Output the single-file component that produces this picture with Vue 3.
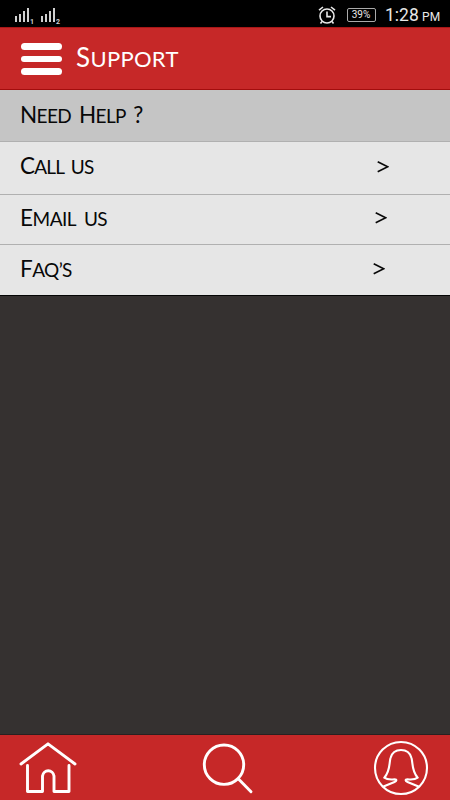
<script setup>
// Splits a label into capital and lowercase runs, lowercase ones are drawn as small caps
const runs = (label) => label.match(/[A-Z?]+|[^A-Z?]+/g).map((text) => ({
  text,
  cap: /[A-Z?]/.test(text)
}))

const title = runs('Support')

const rows = [
  { id: 'heading', label: runs('Need Help ?'), arrow: false },
  { id: 'call', label: runs('Call us'), arrow: true },
  { id: 'email', label: runs('Email us'), arrow: true },
  { id: 'faq', label: runs('Faq’s'), arrow: true }
]
</script>

<template>
  <div class="screen">
    <div class="status-bar">
      <div class="signals">
        <svg v-for="n in 2" :key="n" class="signal" width="20" height="18" viewBox="0 0 20 18">
          <path d="M1 10h2v6H1zM5 8h2v8H5zM9 5h2v11H9zM13 2h2v14h-2z" fill="#d0d0d0" />
          <text x="16" y="17.5">{{ n }}</text>
        </svg>
      </div>
      <svg class="alarm" width="18" height="20" viewBox="0 0 18 20">
        <g fill="none" stroke="#e8e8e8" stroke-width="1.6">
          <circle cx="9" cy="11" r="7" />
          <path d="M9 6.5V11.6h4M1 5.2L5 2M17 5.2L13 2M4 16.5L2.5 18.5M14 16.5L15.5 18.5" />
        </g>
      </svg>
      <div class="battery">39%</div>
      <div class="clock">1:28 <small>PM</small></div>
    </div>

    <header class="header">
      <div class="menu">
        <i></i>
        <i></i>
        <i></i>
      </div>
      <h1 class="caps title">
        <span v-for="(run, i) in title" :key="i" :class="{ cap: run.cap }">{{ run.text }}</span>
      </h1>
    </header>

    <main class="content">
      <div v-for="row in rows" :key="row.id" class="row" :class="row.id">
        <div class="caps">
          <span v-for="(run, i) in row.label" :key="i" :class="{ cap: run.cap }">{{ run.text }}</span>
        </div>
        <div v-if="row.arrow" class="arrow">
          <svg width="12" height="12" viewBox="0 0 12 12">
            <path d="M.7 .8L10.7 5.8L.7 10.8" fill="none" stroke="#080808" stroke-width="1.6" />
          </svg>
        </div>
      </div>
    </main>

    <footer class="tabs">
      <svg width="58" height="54" viewBox="0 0 58 54">
        <path d="M2 24L29 3.8L56 24M8.5 25.5V51.5H23.5V36A5.8 6 0 0 1 35 36V51.5H50V25.5" />
      </svg>
      <svg class="search" width="52" height="54" viewBox="0 0 52 54">
        <circle cx="22" cy="24.7" r="19.7" />
        <path d="M36.5 39L49 51.7" />
      </svg>
      <svg class="profile" width="56" height="56" viewBox="0 0 56 56">
        <circle cx="28" cy="28" r="26" />
        <path
          d="M10.5 46.5L21.5 42C24 41 24 39.3 21.5 39.3C17.5 39.8 13.5 39.3 11.3 37.6C17.5 31 16 23 17.5 18C19 12.5 23 10 28 10C33 10 37 12.5 38.5 18C40 23 38.5 31 44.7 37.6C42.5 39.3 38.5 39.8 34.5 39.3C32 39.3 32 41 34.5 42L45.5 46.5"
        />
      </svg>
    </footer>
  </div>
</template>

<style>
body {
  margin: 0;
}
</style>

<style scoped>
.screen {
  display: flex;
  flex-direction: column;
  width: 450px;
  height: 800px;
  overflow: hidden;
  background: #353130;
  font-family: Lato, 'Liberation Sans', sans-serif;
}
.status-bar {
  display: flex;
  align-items: center;
  height: 27px;
  padding: 0 10px 0 14px;
  box-sizing: border-box;
  background: #000;
  color: #e8e8e8;
  font-family: Roboto, sans-serif;
}
.signals {
  display: flex;
  gap: 6px;
  flex: 1;
  padding-top: 3px;
}
.signal {
  overflow: visible;
}
.signal text {
  font: bold 7px Roboto, sans-serif;
  fill: #d0d0d0;
}
.alarm {
  margin: 3px 11px 0 0;
}
.battery {
  width: 29px;
  height: 14px;
  margin: 3px 9px 0 0;
  box-sizing: border-box;
  border: 1px solid #aaa;
  border-radius: 2px;
  font-size: 10px;
  line-height: 12px;
  padding-right: 1px;
  text-align: center;
}
.clock {
  width: 55px;
  padding-top: 5px;
  font-size: 17.5px;
  line-height: 22px;
  white-space: nowrap;
}
.clock small {
  margin-left: -1px;
  font-size: 12px;
}
.header {
  display: flex;
  height: 63px;
  box-sizing: border-box;
  padding: 14px 0 0 21px;
  border-top: 1px solid #a81717;
  border-bottom: 1px solid #a30d0d;
  background: #c62828;
  color: #fff;
}
.menu {
  display: flex;
  flex-direction: column;
  gap: 6px;
  width: 41px;
  padding-top: 1px;
}
.menu i {
  height: 6.6px;
  border-radius: 3.5px;
  background: #fff;
}
.caps {
  font-size: 19px;
  font-weight: 400;
  line-height: 30px;
  text-transform: uppercase;
  white-space: pre;
}
.caps .cap {
  font-size: 22.5px;
}
.title {
  margin: 0 0 0 14px;
  font-size: 22px;
  letter-spacing: 0.3px;
}
.title .cap {
  font-size: 26px;
}
.content {
  flex: 1;
}
.row {
  display: flex;
  justify-content: space-between;
  height: 51px;
  box-sizing: border-box;
  padding: 9px 0 0 20px;
  border-bottom: 1px solid #b0b0b0;
  background: #e6e6e6;
  color: #080808;
}
.heading {
  height: 52px;
  padding-top: 10px;
  background: #c5c5c5;
  letter-spacing: -0.6px;
  word-spacing: 3.5px;
}
.call {
  height: 53px;
  letter-spacing: -0.8px;
  word-spacing: 3px;
}
.email {
  height: 50px;
  padding-top: 8px;
  letter-spacing: -0.5px;
  word-spacing: 4px;
}
.faq {
  border-color: #050505;
  letter-spacing: -0.6px;
}
.arrow {
  padding-top: 10px;
  line-height: 0;
}
.call .arrow {
  margin-right: 61px;
}
.email .arrow {
  margin-right: 63px;
  padding-top: 9px;
}
.faq .arrow {
  margin-right: 65px;
  padding-top: 9px;
}
.tabs {
  display: flex;
  justify-content: space-between;
  align-items: flex-start;
  height: 66px;
  box-sizing: border-box;
  padding: 5px 21px 0 19px;
  border-top: 1px solid #2a2020;
  background: #c62828;
}
.tabs svg {
  fill: none;
  stroke: #fff;
  stroke-width: 2.9;
  stroke-linecap: round;
  stroke-linejoin: round;
  overflow: visible;
}
.tabs .search {
  margin-left: 5px;
}
.tabs .profile {
  stroke-width: 2.1;
}
</style>
